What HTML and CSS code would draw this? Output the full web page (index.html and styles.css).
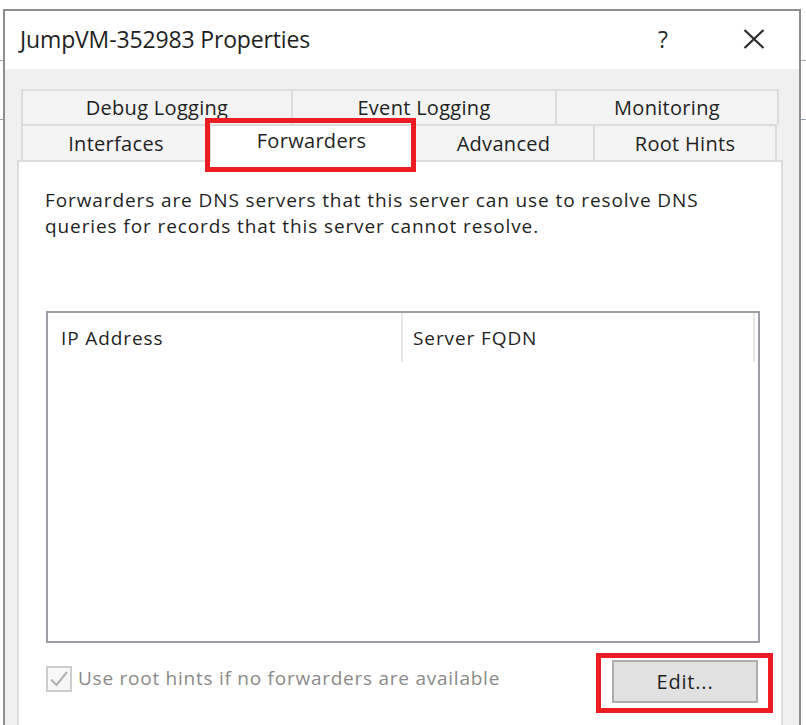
FILE: index.html
```html
<!DOCTYPE html>
<html>
<head>
<meta charset="utf-8">
<link rel="stylesheet" href="styles.css">
</head>
<body>
<div class="dialog">
  <div class="titlebar">
    <span class="title">JumpVM-352983 Properties</span>
    <span class="help">?</span>
    <svg class="close" width="22" height="20" viewBox="0 0 22 20"><path d="M1.5 1 L20.5 19 M20.5 1 L1.5 19" stroke="#2b2b2b" stroke-width="2.2" fill="none"/></svg>
  </div>
  <div class="dbody">
    <div class="tabs">
      <div class="row">
        <div class="tab w270">Debug Logging</div>
        <div class="tab w264">Event Logging</div>
        <div class="tab w224 last">Monitoring</div>
      </div>
      <div class="row row2">
        <div class="tab w188">Interfaces</div>
        <div class="tab w205 selected"><span class="sel-text">Forwarders</span></div>
        <div class="tab w181">Advanced</div>
        <div class="tab w184 last">Root Hints</div>
      </div>
    </div>
    <div class="panel">
      <p class="desc">Forwarders are DNS servers that this server can use to resolve DNS<br>queries for records that this server cannot resolve.</p>
      <div class="listbox">
        <div class="lhead">
          <div class="col col1">IP Address</div>
          <div class="col col2">Server FQDN</div>
        </div>
      </div>
      <div class="bottom">
        <div class="check">
          <span class="cbox"><svg width="22" height="22" viewBox="0 0 22 22"><path d="M3 11.5 L8.5 17 L19 4" stroke="#b0b0b0" stroke-width="2" fill="none"/></svg></span>
          <span class="clabel">Use root hints if no forwarders are available</span>
        </div>
        <div class="btnwrap">
          <div class="btn">Edit...</div>
        </div>
      </div>
    </div>
  </div>
</div>
</body>
</html>
```
FILE: styles.css
```css
html, body {
  margin: 0;
  padding: 0;
  height: 725px;
  overflow: hidden;
}
body {
  background:
    linear-gradient(#a8a8a8, #a8a8a8) 0 60px / 100% 1px no-repeat,
    linear-gradient(#9aa3b0, #9aa3b0) 0 119px / 100% 1px no-repeat,
    #ffffff;
  font-family: "Open Sans", "Noto Sans", sans-serif;
  color: #1f1f1f;
}
.dialog {
  margin: 9px 0 0 3px;
  width: 798px;
  height: 716px;
  box-sizing: border-box;
  border: 2px solid #8e8e8e;
  border-bottom: none;
  background: #f0f0f0;
  display: flex;
  flex-direction: column;
}
.titlebar {
  height: 58px;
  background: #ffffff;
  display: flex;
  align-items: center;
  padding-left: 15px;
  flex-shrink: 0;
}
.title {
  font-size: 23px;
  letter-spacing: -0.15px;
  color: #1f1f1f;
  margin-top: -2px;
}
.help {
  font-size: 23px;
  margin-left: auto;
  margin-right: 75px;
  margin-top: -2px;
  color: #2b2b2b;
}
.close {
  margin-right: 34px;
  margin-top: -2px;
}
.dbody {
  flex: 1;
  padding-top: 20px;
  display: flex;
  flex-direction: column;
}
.tabs {
  margin-left: 16px;
  width: 758px;
}
.row {
  display: flex;
  height: 35px;
}
.row2 {
  height: 36px;
}
.tab {
  box-sizing: border-box;
  border-top: 2px solid #dcdcdc;
  border-left: 2px solid #dcdcdc;
  background: #f3f3f3;
  font-size: 20px;
  letter-spacing: 0.3px;
  color: #1f1f1f;
  display: flex;
  align-items: center;
  justify-content: center;
  white-space: nowrap;
}
.tab.last { border-right: 2px solid #dcdcdc; }
.w270 { width: 270px; }
.w264 { width: 264px; }
.w224 { width: 224px; }
.w188 { width: 188px; }
.w205 { width: 205px; }
.w181 { width: 181px; }
.w184 { width: 184px; }
.tab.selected {
  background: #ffffff;
  position: relative;
  z-index: 2;
  margin-bottom: -2px;
  height: 38px;
  border-right: 2px solid #dcdcdc;
  margin-right: -2px;
}
.sel-text {
  margin-top: -7px;
}
.tab.selected::after {
  content: "";
  position: absolute;
  left: -6px;
  right: -4px;
  top: -8px;
  bottom: -10px;
  border: 5px solid #ec1c24;
}
.panel {
  flex: 1;
  margin-left: 12px;
  width: 766px;
  box-sizing: border-box;
  border: 2px solid #dcdcdc;
  border-bottom: none;
  background: #ffffff;
  padding: 25px 21px 0 27px;
}
.desc {
  margin: 0 0 0 -1px;
  font-size: 19px;
  line-height: 26px;
  letter-spacing: 0.9px;
  white-space: nowrap;
  color: #1f1f1f;
}
.listbox {
  margin-top: 72px;
  height: 332px;
  box-sizing: border-box;
  border: 2px solid #9b9ea4;
  background: #ffffff;
}
.lhead {
  display: flex;
  height: 49px;
}
.col {
  font-size: 19px;
  letter-spacing: 0.9px;
  display: flex;
  align-items: center;
  box-sizing: border-box;
  border-right: 2px solid #e6e6e6;
  color: #1f1f1f;
}
.col1 { width: 355px; padding-left: 13px; }
.col2 { width: 352px; padding-left: 10px; }
.bottom {
  display: flex;
  margin-top: 17px;
  height: 43px;
}
.check {
  display: flex;
  align-items: flex-start;
  padding-top: 6px;
}
.cbox {
  width: 26px;
  height: 26px;
  box-sizing: border-box;
  border: 2px solid #cdcdcd;
  background: #f7f7f7;
  display: flex;
  align-items: center;
  justify-content: center;
}
.clabel {
  margin-left: 6px;
  font-size: 19px;
  letter-spacing: 0.75px;
  color: #8a8a8a;
  margin-top: -1px;
}
.btnwrap {
  margin-left: auto;
  margin-right: 2px;
  position: relative;
}
.btnwrap::after {
  content: "";
  position: absolute;
  left: -16px;
  right: -15px;
  top: -7px;
  bottom: -10px;
  border: 5px solid #ec1c24;
}
.btn {
  width: 146px;
  height: 43px;
  box-sizing: border-box;
  border: 2px solid #adadad;
  background: #e1e1e1;
  font-size: 20px;
  letter-spacing: 0.8px;
  display: flex;
  align-items: center;
  justify-content: center;
  color: #1f1f1f;
}
```
